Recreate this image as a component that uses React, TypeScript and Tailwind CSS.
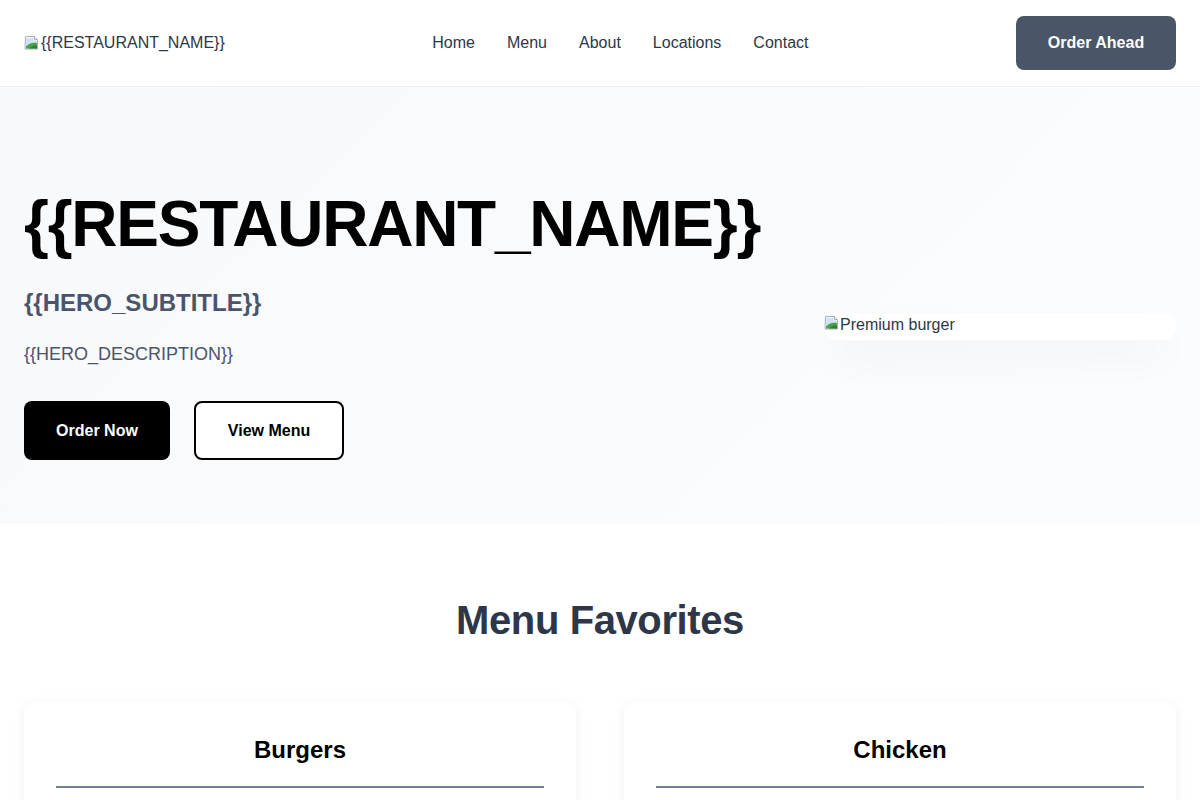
import React from 'react'

const font = { fontFamily: '"Liberation Sans", Arial, Helvetica, sans-serif' }

function BrokenImage() {
  return (
    <svg width="16" height="16" viewBox="0 0 16 16" className="shrink-0">
      <path d="M1.5 1.5h9l3 3v9.5h-12.5z" fill="#f4f6f8" stroke="#a9b2bb" />
      <path d="M10.5 1.5v3h3" fill="#e4e8ec" stroke="#a9b2bb" />
      <path d="M2 3h7.5v2.5h3.5v3.5l-11 3z" fill="#cfe3f5" />
      <path d="M2 11.5c3-3.5 6-4.5 11-3.5v5.5h-11z" fill="#4aa34a" />
      <path d="M5 13.5c3-2.5 5-3 8-3v3z" fill="#2f7d32" />
    </svg>
  )
}

const navItems = ['Home', 'Menu', 'About', 'Locations', 'Contact']

export default function App() {
  return (
    <div className="min-h-screen bg-white text-[#2d3748]" style={font}>
      {/* Header */}
      <header className="bg-white border-b border-[#f0f1f3]">
        <div className="flex items-center justify-between px-6 py-4">
          <a href="#" className="flex items-center text-base text-[#2d3748]">
            <BrokenImage />
            <span className="ml-px">{'{{RESTAURANT_NAME}}'}</span>
          </a>
          <nav className="flex items-center gap-8">
            {navItems.map((item) => (
              <a key={item} href="#" className="text-base text-[#2d3748]">
                {item}
              </a>
            ))}
          </nav>
          <a
            href="#"
            className="flex h-[54px] w-[160px] items-center justify-center rounded-lg bg-[#4a5568] text-base font-bold text-white"
          >
            Order Ahead
          </a>
        </div>
      </header>

      {/* Hero */}
      <section className="bg-[linear-gradient(135deg,#f7f9fb_0%,#fbfcfd_100%)] px-6 pt-[102px] pb-[64px]">
        <div className="flex items-center gap-16">
          <div className="shrink-0">
            <h1 className="mb-[26px] text-[64px] font-bold leading-[1.1] tracking-[-1.25px] text-black">
              {'{{RESTAURANT_NAME}}'}
            </h1>
            <p className="mb-5 text-2xl font-bold leading-[1.5] text-[#4a5568]">
              {'{{HERO_SUBTITLE}}'}
            </p>
            <p className="mb-[33px] text-lg leading-[1.5] text-[#4a5568]">
              {'{{HERO_DESCRIPTION}}'}
            </p>
            <div className="flex gap-6">
              <a
                href="#"
                className="flex h-[59px] w-[146px] items-center justify-center rounded-lg bg-black text-base font-bold text-white"
              >
                Order Now
              </a>
              <a
                href="#"
                className="flex h-[59px] w-[150px] items-center justify-center rounded-lg border-2 border-black bg-white text-base font-bold text-black"
              >
                View Menu
              </a>
            </div>
          </div>
          <div className="flex-1">
            <div className="mt-[3px] flex h-[27px] w-full items-start rounded-xl bg-white pt-[2px] shadow-[0_20px_40px_-10px_rgba(0,0,0,0.12)]">
              <BrokenImage />
              <span className="text-base leading-5 text-[#2d3748]">Premium burger</span>
            </div>
          </div>
        </div>
      </section>

      {/* Menu favorites */}
      <section className="bg-white px-6 pt-[72px] pb-16">
        <h2 className="mb-[58px] text-center text-[40px] font-bold leading-[1.2] tracking-[-0.4px] text-[#2d3748]">
          Menu Favorites
        </h2>
        <div className="grid grid-cols-2 gap-12">
          {['Burgers', 'Chicken'].map((cat) => (
            <div
              key={cat}
              className="rounded-xl bg-white px-8 pt-[30px] pb-8 shadow-[0_2px_14px_rgba(0,0,0,0.06)]"
            >
              <h3 className="border-b-2 border-[#718096] pb-[18px] text-center text-2xl font-bold leading-[1.5] text-black">
                {cat}
              </h3>
              <div className="h-40" />
            </div>
          ))}
        </div>
      </section>
    </div>
  )
}
